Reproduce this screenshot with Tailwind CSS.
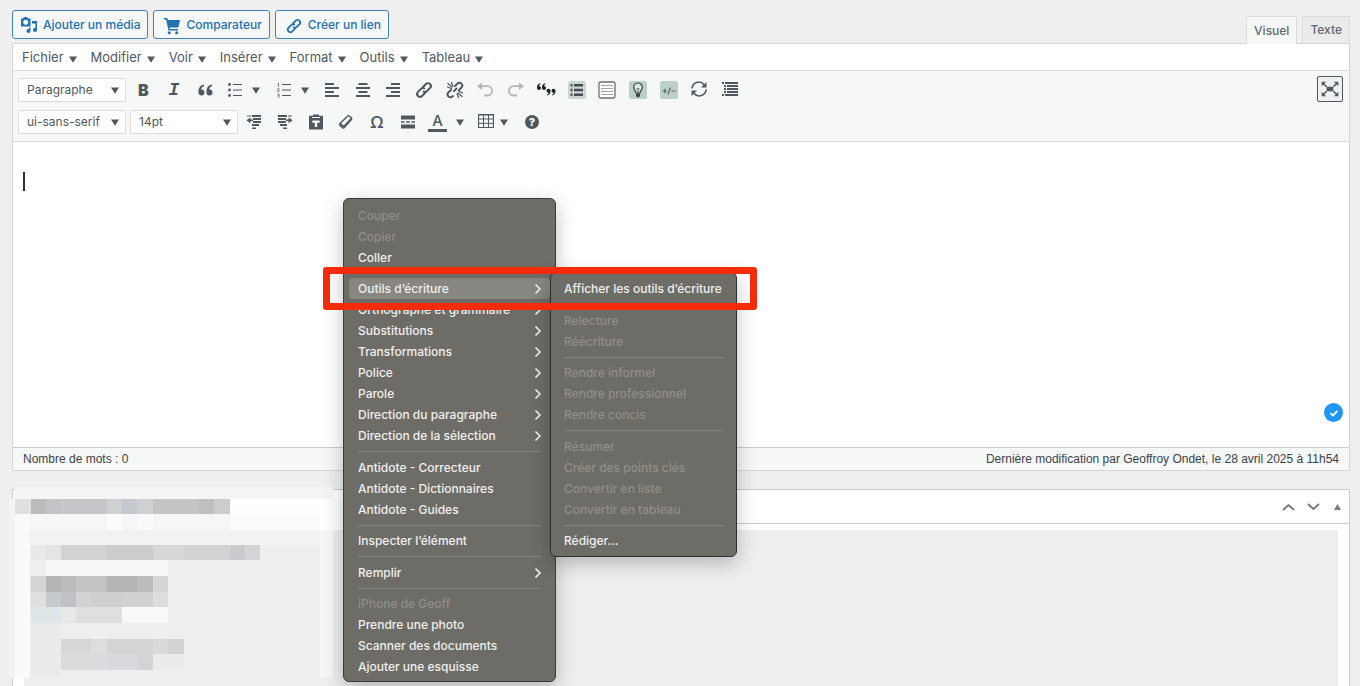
<!DOCTYPE html>
<html lang="fr">
<head>
  <meta charset="UTF-8">
  <title>Modifier l'article</title>
  <script src="https://cdn.jsdelivr.net/npm/@tailwindcss/browser@4"></script>
</head>
<body class="relative h-screen overflow-hidden bg-[#efefef] font-['Inter',sans-serif] text-[13px] text-[#50575e]">

  <!-- Shared icons -->
  <svg class="hidden">
    <symbol id="caret" viewBox="0 0 8 7"><path d="M0 0.5h8L4 6.8z" fill="currentColor"/></symbol>
    <symbol id="link" viewBox="0 0 20 20">
      <g fill="none" stroke="currentColor" stroke-width="2" stroke-linecap="round" transform="rotate(-45 10 10)">
        <path d="M8.6 12.9H4.400a2.900 2.900 0 0 1 0-5.800h4.200a2.900 2.900 0 0 1 2.700 1.900"/>
        <path d="M11.400 7.100h4.200a2.900 2.900 0 0 1 0 5.800h-4.200a2.900 2.900 0 0 1-2.700-1.900"/>
      </g>
    </symbol>
    <symbol id="chevron" viewBox="0 0 6 10"><path d="M1 1l4 4-4 4" fill="none" stroke="currentColor" stroke-width="1.700" stroke-linecap="round" stroke-linejoin="round"/></symbol>
  </svg>

  <main class="flex h-full flex-col pl-3 pr-[10px] pt-[10px]">

    <!-- Media buttons and tabs -->
    <div class="flex h-[33px] items-start justify-between text-[12px]">
      <div class="flex gap-[5px] font-medium text-[#2271b1]">
        <button class="flex h-[29px] items-center gap-[5px] rounded-[3px] border border-[#4083b5] bg-[#f6f7f7] px-[7px]">
          <svg class="size-[18px]" viewBox="0 0 18 18" fill="currentColor">
            <path fill-rule="evenodd" d="M4 1h3l1 1.500h2.500v8H1v-8h2zM5.700 3.700a2.500 2.500 0 1 0 0 5 2.500 2.500 0 0 0 0-5z"/>
            <path d="M12 5h5v9a2 2 0 1 1-1.600-2V7.500H12z"/>
            <path d="M10.500 11.500V15a2 2 0 1 1-1.600-2v-1.500z"/>
          </svg>
          Ajouter un média
        </button>
        <button class="flex h-[29px] items-center gap-[5px] rounded-[3px] border border-[#4083b5] bg-[#f6f7f7] px-[7px]">
          <svg class="ml-[2px] mt-[2px] size-[18px]" viewBox="0 0 18 18" fill="currentColor">
            <path d="M1 1h3.200l.8 2h12l-1.700 7.500H6.500l.3 1.500H15v1.600H5.500L3.100 2.600H1z"/>
            <circle cx="6.200" cy="15.700" r="1.500"/><circle cx="13.700" cy="15.700" r="1.500"/>
          </svg>
          Comparateur
        </button>
        <button class="flex h-[29px] items-center gap-[5px] rounded-[3px] border border-[#4083b5] bg-[#f6f7f7] px-[7px]">
          <svg class="ml-[2px] mt-[2px] size-[18px]"><use href="#link"/></svg>
          Créer un lien
        </button>
      </div>
      <div class="flex h-[27px] items-start gap-[5px] self-end font-medium text-[#646970]">
        <button class="relative h-7 border border-b-0 border-[#dcdcde] bg-[#f6f7f7] px-[7px]">Visuel</button>
        <button class="h-[27px] border border-b-0 border-[#dcdcde] bg-[#ebebeb] px-[7px]">Texte</button>
      </div>
    </div>

    <!-- Editor -->
    <section class="border border-[#d3d5d8] bg-white">
      <nav class="flex h-[27px] items-center gap-[14px] border-b border-[#dcdcde] px-[9px] pt-[2px]">
        <button class="flex items-center gap-[5px]">Fichier <svg class="mt-[3px] h-[7px] w-2"><use href="#caret"/></svg></button>
        <button class="flex items-center gap-[5px]">Modifier <svg class="mt-[3px] h-[7px] w-2"><use href="#caret"/></svg></button>
        <button class="flex items-center gap-[5px]">Voir <svg class="mt-[3px] h-[7px] w-2"><use href="#caret"/></svg></button>
        <button class="flex items-center gap-[5px]">Insérer <svg class="mt-[3px] h-[7px] w-2"><use href="#caret"/></svg></button>
        <button class="flex items-center gap-[5px]">Format <svg class="mt-[3px] h-[7px] w-2"><use href="#caret"/></svg></button>
        <button class="flex items-center gap-[5px]">Outils <svg class="mt-[3px] h-[7px] w-2"><use href="#caret"/></svg></button>
        <button class="flex items-center gap-[5px]">Tableau <svg class="mt-[3px] h-[7px] w-2"><use href="#caret"/></svg></button>
      </nav>

      <div class="flex items-start justify-between border-b border-[#dcdcde] bg-[#f6f7f7] py-[5px] pl-[5px] pr-[6px]">
        <div class="flex flex-col gap-1">
          <!-- Row 1 -->
          <div class="flex h-7 items-center">
            <div class="relative mr-[2px] w-[108px]">
              <select aria-label="Format de bloc" class="block h-6 w-full appearance-none border border-[#dcdcde] bg-white pl-2 text-[12px]"><option>Paragraphe</option></select>
              <svg class="pointer-events-none absolute right-[7px] top-[9px] h-[7px] w-2"><use href="#caret"/></svg>
            </div>
            <div class="grid w-[92px] grid-cols-3">
              <button aria-label="Gras" class="flex h-7 items-center justify-center text-[16px] font-black">B</button>
              <button aria-label="Italique" class="flex h-7 items-center justify-center font-['Liberation_Mono',monospace] text-[18px] font-bold italic">I</button>
              <button aria-label="Citation" class="flex h-7 items-center justify-center">
                <svg class="size-5" viewBox="0 0 20 20" fill="currentColor"><path d="M9.500 12.500a3 3 0 1 1-6 0C3.200 8.500 5 5.300 9 4.500v1.700C7.200 6.900 6.300 8 6.300 9.600a3 3 0 0 1 3.200 2.900zM17.500 12.500a3 3 0 1 1-6 0C11.200 8.500 13 5.300 17 4.500v1.700c-1.800.7-2.700 1.800-2.700 3.400a3 3 0 0 1 3.200 2.900z"/></svg>
              </button>
            </div>
            <button aria-label="Liste à puces" class="flex h-7 w-[49px] items-center gap-[7px] pl-[5px]">
              <svg class="size-5" viewBox="0 0 20 20" fill="currentColor"><circle cx="4.500" cy="4.500" r="1.400"/><circle cx="4.500" cy="10" r="1.400"/><circle cx="4.500" cy="15.500" r="1.400"/><path d="M8 4h9v1H8zM8 9.500h9v1H8zM8 15h9v1H8z"/></svg>
              <svg class="h-[7px] w-2"><use href="#caret"/></svg>
            </button>
            <button aria-label="Liste numérotée" class="flex h-7 w-12 items-center gap-[7px] pl-[5px]">
              <svg class="size-5" viewBox="0 0 20 20" fill="currentColor"><path d="M8 4h9v1H8zM8 9.500h9v1H8zM8 15h9v1H8z"/><path d="M4 3h1v4H4zM3.500 3.500h1v1h-1zM3.200 8.300h2.300v2.200H4.200v.8h1.500v.8H3.200V9.800h1.400v-.7H3.200zM3.200 13.500h2.400v4H3.200v-.8h1.500v-.8H3.500v-.8h1.200v-.8H3.200z" opacity=".7"/></svg>
              <svg class="h-[7px] w-2"><use href="#caret"/></svg>
            </button>
            <div class="grid w-[428px] grid-cols-14">
              <button aria-label="Aligner à gauche" class="flex h-7 items-center justify-center">
                <svg class="size-5" viewBox="0 0 20 20" fill="currentColor"><path d="M3 3h9v2H3zM3 7h14v2H3zM3 11h9v2H3zM3 15h14v2H3z"/></svg>
              </button>
              <button aria-label="Centrer" class="flex h-7 items-center justify-center">
                <svg class="size-5" viewBox="0 0 20 20" fill="currentColor"><path d="M5.500 3h9v2h-9zM3 7h14v2H3zM5.500 11h9v2h-9zM3 15h14v2H3z"/></svg>
              </button>
              <button aria-label="Aligner à droite" class="flex h-7 items-center justify-center">
                <svg class="size-5" viewBox="0 0 20 20" fill="currentColor"><path d="M8 3h9v2H8zM3 7h14v2H3zM8 11h9v2H8zM3 15h14v2H3z"/></svg>
              </button>
              <button aria-label="Insérer un lien" class="flex h-7 items-center justify-center">
                <svg class="size-5"><use href="#link"/></svg>
              </button>
              <button aria-label="Supprimer le lien" class="flex h-7 items-center justify-center">
                <svg class="size-5" viewBox="0 0 20 20" fill="none" stroke="currentColor" stroke-width="2" stroke-linecap="round"><path d="M8 16l-1 .8a2.900 2.900 0 0 1-4-4L6 10M10 6l2.800-2.800a2.900 2.900 0 0 1 4 4L14 10.200M9 11l2.500-2.500"/><path stroke-width="1.300" d="M3 3.500l4 3.500M6.500 2.500l1.500 3.500M2.500 7l4 1.500M13 13l4 3.500M12 14l1.500 3.500M14 11.500l3.500 1.300"/></svg>
              </button>
              <button aria-label="Annuler" class="flex h-7 items-center justify-center text-[#b4b7ba]">
                <svg class="size-5" viewBox="0 0 20 20"><path d="M7 2.500v7.500L2 6.200z" fill="currentColor"/><path d="M6 6.200h6.500a4.600 4.600 0 0 1 0 9.300H9" fill="none" stroke="currentColor" stroke-width="1.800"/></svg>
              </button>
              <button aria-label="Rétablir" class="flex h-7 items-center justify-center text-[#b4b7ba]">
                <svg class="size-5" viewBox="0 0 20 20"><path d="M13 2.500v7.500l5-3.800z" fill="currentColor"/><path d="M14 6.200H7.500a4.600 4.600 0 0 0 0 9.300H11" fill="none" stroke="currentColor" stroke-width="1.800"/></svg>
              </button>
              <button aria-label="Guillemets" class="flex h-7 items-center justify-center text-[#1d2327]">
                <svg class="size-5" viewBox="0 0 20 20" fill="currentColor"><path d="M5 8a2 2 0 1 1-4 0C.8 5.500 2 3.800 4.300 3.300v1.100c-1 .4-1.400.9-1.400 1.600A2 2 0 0 1 5 8zM10 8a2 2 0 1 1-4 0c-.2-2.500 1-4.200 3.300-4.700v1.100c-1 .4-1.400.9-1.400 1.600A2 2 0 0 1 10 8zM10.500 10.800a2 2 0 1 1 4 0c.2 2.500-1 4.200-3.300 4.700v-1.100c1-.4 1.400-.9 1.400-1.600a2 2 0 0 1-2.100-2zM15.500 10.800a2 2 0 1 1 4 0c.2 2.500-1 4.200-3.300 4.700v-1.100c1-.4 1.400-.9 1.400-1.600a2 2 0 0 1-2.100-2z"/></svg>
              </button>
              <button aria-label="Sommaire" class="flex h-7 items-center justify-center">
                <svg class="size-[18px]" viewBox="0 0 18 18"><rect width="18" height="18" rx="2.500" fill="#cbd5d1"/><path d="M6 3h9v2.400H6zM6 7.800h9v2.400H6zM6 12.600h9V15H6zM2.500 3h2v2.400h-2zM2.500 7.800h2v2.400h-2zM2.500 12.600h2V15h-2z" fill="#454b50"/></svg>
              </button>
              <button aria-label="Encadré" class="flex h-7 items-center justify-center">
                <svg class="size-[18px]" viewBox="0 0 18 18" fill="none"><rect x="1" y="1" width="16" height="16" rx="1.500" fill="#fff" stroke="#6b7074" stroke-width="1.300"/><path d="M3 4.500h12M3 7.500h12M3 10.500h12M3 13.500h12" stroke="#a2a6a9"/></svg>
              </button>
              <button aria-label="Astuce" class="flex h-7 items-center justify-center">
                <svg class="size-[18px]" viewBox="0 0 18 18" fill="none"><rect width="18" height="18" rx="2.500" fill="#bdd0c8"/><path d="M7 12c0-2-2.300-3-2.300-5.700a4.300 4.300 0 0 1 8.600 0C13.300 9 11 10 11 12z" fill="#dbe5e1" stroke="#3d4347" stroke-width="1.200"/><path d="M7.800 7l1.200 1.500L10.200 7M9 8.500V12" stroke="#3d4347" stroke-width=".8"/><path d="M7 12.500h4v2.500l-1 1.200H8L7 15z" fill="#3d4347"/></svg>
              </button>
              <button aria-label="Plus et moins" class="flex h-7 items-center justify-center">
                <svg class="size-[18px]" viewBox="0 0 18 18" fill="none"><rect width="18" height="18" rx="2.500" fill="#bdd0c8"/><path d="M2.500 10h4.600M4.800 7.700v4.600M8 13.500l2.400-7M11.500 10h4" stroke="#5c6965" stroke-width="1.200"/></svg>
              </button>
              <button aria-label="Actualiser" class="flex h-7 items-center justify-center pb-[3px]">
                <svg class="size-[18px]" viewBox="0 0 18 18"><path d="M2 8.500A6.700 6.700 0 0 1 14 4.700M16 9.500A6.700 6.700 0 0 1 4 13.300" fill="none" stroke="currentColor" stroke-width="1.600"/><path d="M16.500 2v5.500H11zM1.500 16v-5.500H7z" fill="currentColor"/></svg>
              </button>
              <button aria-label="Table des matières" class="flex h-7 items-center justify-center pb-[3px]">
                <svg class="size-[18px]" viewBox="0 0 18 18" fill="currentColor"><path d="M1 2h2v2H1zM4 2h13v2H4zM3 5h2v2H3zM6 5h11v2H6zM3 8h2v2H3zM6 8h11v2H6zM3 11h2v2H3zM6 11h11v2H6zM1 14h2v2H1zM4 14h13v2H4z"/></svg>
              </button>
            </div>
          </div>

          <!-- Row 2 -->
          <div class="flex h-7 items-center">
            <div class="relative mr-1 w-[108px]">
              <select aria-label="Police" class="block h-6 w-full appearance-none border border-[#dcdcde] bg-white pl-2 text-[12px]"><option>ui-sans-serif</option></select>
              <svg class="pointer-events-none absolute right-[7px] top-[9px] h-[7px] w-2"><use href="#caret"/></svg>
            </div>
            <div class="relative mr-px w-[108px]">
              <select aria-label="Taille" class="block h-6 w-full appearance-none border border-[#dcdcde] bg-white pl-2 text-[12px]"><option>14pt</option></select>
              <svg class="pointer-events-none absolute right-[7px] top-[9px] h-[7px] w-2"><use href="#caret"/></svg>
            </div>
            <div class="grid w-[184px] grid-cols-6">
              <button aria-label="Diminuer le retrait" class="flex h-7 items-center justify-center">
                <svg class="size-5" viewBox="0 0 20 20" fill="currentColor"><path d="M8 3h9v2H8zM9 6h8v2H9zM9 9h8v2H9zM8 12h7v2H8zM3 3.500h4v1H3zM8 15.500h4v1.500H8zM6.500 5.500v2h2.500v1.500H6.500v2.200L2.300 8.300z"/></svg>
              </button>
              <button aria-label="Augmenter le retrait" class="flex h-7 items-center justify-center">
                <svg class="size-5" viewBox="0 0 20 20" fill="currentColor"><path d="M3 3h9v2H3zM3 6h8v2H3zM3 9h8v2H3zM5 12h7v2H5zM13 3.500h4v1h-4zM8 15.500h4v1.500H8zM13.500 5.500v2H11v1.500h2.500v2.200l4.200-2.900z"/></svg>
              </button>
              <button aria-label="Coller en texte" class="flex h-7 items-center justify-center">
                <svg class="size-5" viewBox="0 0 20 20"><path d="M7 2.500h6v1.300h4v13.700H3V3.800h4z" fill="currentColor"/><path d="M6.300 8.500h7.400v2.200h-2.500V15H8.800v-4.300H6.300z" fill="#f6f7f7"/><path d="M6 5.500h8" stroke="#f6f7f7"/></svg>
              </button>
              <button aria-label="Effacer la mise en forme" class="flex h-7 items-center justify-center">
                <svg class="size-5" viewBox="0 0 20 20" fill="none" stroke="currentColor" stroke-linejoin="round"><path d="M4 11.500L11.500 4.200c.6-.6 1.200-.7 1.800-.2l2 1.700c.6.6.6 1.300.1 1.900l-7 8c-.5.6-1.200.6-1.800.1l-2.500-2.200c-.7-.6-.7-1.300-.1-2z" stroke-width="1.400"/><path d="M4.300 11.800l3.500 2.700 8-8.500" stroke-width="1.600"/></svg>
              </button>
              <button aria-label="Caractère spécial" class="flex h-7 items-center justify-center font-['Open_Sans',sans-serif] text-[17px] font-semibold">Ω</button>
              <button aria-label="Lire la suite" class="flex h-7 items-center justify-center">
                <svg class="size-5" viewBox="0 0 20 20" fill="currentColor"><path d="M3 3.500h14v4H3zM3 9.200h3.500v1.600H3zM8.200 9.200h3.600v1.600H8.200zM13.500 9.200H17v1.600h-3.500zM3 12.500h14v4H3z"/></svg>
              </button>
            </div>
            <button aria-label="Couleur du texte" class="flex h-7 w-12 items-center gap-[9px] pl-[5px]">
              <span class="w-[19px] border-b-[3px] border-current text-center text-[15px] font-medium leading-[16px]">A</span>
              <svg class="h-[7px] w-2"><use href="#caret"/></svg>
            </button>
            <button aria-label="Tableau" class="flex h-7 w-[46px] items-center gap-[6px] pl-[7px]">
              <svg class="mb-[3px] size-4" viewBox="0 0 16 16" fill="none" stroke="currentColor"><path d="M.5 1.500h15v13H.5z" stroke-width="1.200"/><path d="M0 2h16M.5 6h15M.5 10.300h15M5.500 2v12.500M10.500 2v12.500"/></svg>
              <svg class="h-[7px] w-2"><use href="#caret"/></svg>
            </button>
            <button aria-label="Aide" class="flex h-7 w-[30px] items-center justify-center">
              <span class="flex size-[14px] items-center justify-center rounded-full bg-[#50575e] text-[11px] font-extrabold text-white">?</span>
            </button>
          </div>
        </div>
        <button aria-label="Plein écran" class="flex size-[26px] items-center justify-center rounded-[2px] border border-[#50575e] bg-[#f0f0f1]">
          <svg class="size-5" viewBox="0 0 18 18" fill="currentColor"><path d="M6 7h6v4H6zM1.500 2.500h4L1.500 6.500zM16.500 2.500h-4l4 4zM1.500 15.500h4l-4-4zM16.500 15.500h-4l4-4z"/><path d="M3 4l3 3M15 4l-3 3M3 14l3-3M15 14l-3-3" stroke="currentColor" stroke-width="1.400"/></svg>
        </button>
      </div>

      <div class="relative">
        <textarea aria-label="Contenu" class="block h-[305px] w-full resize-none bg-white p-[10px] outline-none"></textarea>
        <span class="absolute left-[10px] top-[30px] h-[19px] w-[2px] bg-[#2c3338]"></span>
        <span class="absolute bottom-[25px] right-[6px] flex size-[19px] items-center justify-center rounded-full bg-[#2196f0]">
          <svg class="size-[10px]" viewBox="0 0 10 10"><path d="M1.500 5.200l2.400 2.300 4.500-4.500" fill="none" stroke="#fff" stroke-width="1.800"/></svg>
        </span>
      </div>

      <footer class="flex h-[23px] items-center justify-between border-t border-[#c9ced2] bg-[#f6f7f7] px-[10px] font-['Liberation_Sans',sans-serif] text-[12px] text-[#3c434a]">
        <span>Nombre de mots : 0</span>
        <span>Dernière modification par Geoffroy Ondet, le 28 avril 2025 à 11h54</span>
      </footer>
    </section>

    <!-- Meta box -->
    <section class="mt-[18px] flex flex-1 flex-col border border-b-0 border-[#c9cccf] bg-white">
      <header class="flex h-[34px] items-center justify-end gap-3 border-b border-[#c9cccf] pr-2 text-[#787c82]">
        <button aria-label="Monter"><svg class="h-2 w-[13px]" viewBox="0 0 13 8"><path d="M1 7l5.500-5L12 7" fill="none" stroke="currentColor" stroke-width="2"/></svg></button>
        <button aria-label="Descendre"><svg class="h-2 w-[13px]" viewBox="0 0 13 8"><path d="M1 1l5.500 5L12 1" fill="none" stroke="currentColor" stroke-width="2"/></svg></button>
        <button aria-label="Replier" class="pl-[2px]"><svg class="h-[6px] w-[7px]" viewBox="0 0 7 6"><path d="M3.500 0L7 6H0z" fill="currentColor"/></svg></button>
      </header>
      <div class="mx-[11px] mt-[6px] flex-1 bg-[#eee]"></div>
    </section>
  </main>

  <!-- Pixelated area -->
  <svg id="mosaic" class="absolute left-0 top-[487px] h-[191px] w-[345px]" viewBox="0 0 345 191" shape-rendering="crispEdges"></svg>

  <!-- Context menus -->
  <div id="mainMenu" role="menu" class="absolute left-[343px] top-[198px] w-[213px] rounded-md border border-[#3b3b39] bg-[#6d6c67] px-[5px] pb-[4px] pt-[6px] shadow-[0_6px_20px_rgba(0,0,0,0.25)]"></div>
  <div id="subMenu" role="menu" class="absolute left-[550px] top-[272px] w-[187px] rounded-md border border-[#2f2f2e] bg-[#6d6c67] px-[4px] py-[5px] shadow-[0_6px_20px_rgba(0,0,0,0.25)]"></div>

  <!-- Highlight frame -->
  <div class="pointer-events-none absolute left-[323px] top-[267px] h-[43px] w-[434px] rounded-[3px] border-[7px] border-[#f42c0c]"></div>

  <script>
    // '-' is a short separator, '=' a slightly taller one, '!' disabled, '>' has a submenu, '*' selected
    const mainItems = [
      '!Couper', '!Copier', 'Coller', '-',
      '*>Outils d’écriture', '>Orthographe et grammaire', '>Substitutions', '>Transformations',
      '>Police', '>Parole', '>Direction du paragraphe', '>Direction de la sélection', '=',
      'Antidote - Correcteur', 'Antidote - Dictionnaires', 'Antidote - Guides', '-',
      'Inspecter l’élément', '=', '>Remplir', '-',
      '!iPhone de Geoff', 'Prendre une photo', 'Scanner des documents', 'Ajouter une esquisse'
    ];
    const subItems = [
      'Afficher les outils d’écriture', '=', '!Relecture', '!Réécriture', '-',
      '!Rendre informel', '!Rendre professionnel', '!Rendre concis', '=',
      '!Résumer', '!Créer des points clés', '!Convertir en liste', '!Convertir en tableau', '-',
      'Rédiger...'
    ];

    function fillMenu(id, items) {
      const menu = document.getElementById(id);
      items.forEach(item => {
        if (item === '-' || item === '=') {
          const sep = document.createElement('div');
          sep.className = "mx-[9px] flex items-center " + (item === '-' ? "h-[10px]" : "h-[11px]");
          sep.innerHTML = '<div class="h-px w-full bg-[#868580]"></div>';
          menu.appendChild(sep);
          return;
        }
        const button = document.createElement('button');
        button.setAttribute('role', 'menuitem');
        button.disabled = item.startsWith('!');
        button.className = "flex h-[21px] w-full items-center justify-between rounded-[4px] px-[9px] text-left text-[12px] font-medium whitespace-nowrap "
          + (item.startsWith('!') ? "text-[#908f8a]" : "text-[#f0f0ee]")
          + (item.startsWith('*') ? " bg-[#878681]" : "");
        button.textContent = item.replace(/^[!*>]+/, '');
        if (item.includes('>')) {
          button.insertAdjacentHTML('beforeend', '<svg class="h-[10px] w-[6px]"><use href="#chevron"/></svg>');
        }
        menu.appendChild(button);
      });
    }
    fillMenu('mainMenu', mainItems);
    fillMenu('subMenu', subItems);

    // Mosaic blocks: x, y, width, height, colour
    const blocks = [
      [15, 0, 318, 12, '#f5f5f5'], [9, 12, 6, 179, '#f3f3f3'], [15, 12, 318, 179, '#eeeeee'],
      [15, 27, 15, 164, '#fafafa'], [30, 27, 200, 16, '#f6f6f6'], [107, 27, 15, 16, '#fcfcfc'], [137, 27, 16, 16, '#fafafa'],
      [30, 43, 290, 15, '#f2f2f2'],
      [230, 12, 115, 31, '#fefefe'], [230, 27, 90, 16, '#fbfbfb'],
      [15, 12, 16, 15, '#dfe0df'], [31, 12, 15, 15, '#bcbcbe'], [46, 12, 15, 15, '#c3c4c8'], [61, 12, 46, 15, '#c5c6c9'],
      [107, 12, 15, 15, '#cfd0d2'], [122, 12, 15, 15, '#c6c8cf'], [137, 12, 16, 15, '#cfd0d2'], [153, 12, 46, 15, '#c4c4c5'],
      [199, 12, 15, 15, '#bebfbe'], [214, 12, 16, 15, '#ccccce'],
      [31, 58, 15, 15, '#e9e9ea'], [46, 58, 15, 15, '#e5e5e6'], [61, 58, 46, 15, '#d1d2d4'], [107, 58, 46, 15, '#cbccce'], [153, 58, 31, 15, '#d6d7d8'],
      [184, 58, 46, 15, '#d1d2d3'], [230, 58, 15, 15, '#cacbce'], [245, 58, 15, 15, '#d3d4d5'],
      [46, 73, 122, 16, '#f6f6f5'],
      [31, 89, 15, 16, '#d4d4d4'], [46, 89, 15, 16, '#b5b6b7'], [61, 89, 15, 16, '#babbbb'], [76, 89, 31, 16, '#c2c3c3'],
      [107, 89, 30, 16, '#b4b6b5'], [137, 89, 16, 16, '#babbbb'], [153, 89, 15, 16, '#d4d6d6'],
      [31, 105, 15, 15, '#dedfdf'], [46, 105, 15, 15, '#c6c9ce'], [61, 105, 15, 15, '#bfc1c5'], [76, 105, 15, 15, '#d2d3d5'], [91, 105, 31, 15, '#cdcfd1'],
      [122, 105, 31, 15, '#d0d1d3'], [153, 105, 15, 15, '#dcddde'],
      [31, 120, 30, 16, '#dfe6ea'], [61, 120, 15, 16, '#e7e8e8'], [76, 120, 46, 16, '#dedfe0'], [122, 120, 46, 16, '#f9f9f9'],
      [31, 136, 30, 55, '#ebebec'],
      [61, 152, 30, 15, '#d6d7d9'], [91, 152, 16, 15, '#dcdddd'], [107, 152, 46, 15, '#d2d4d6'], [153, 152, 15, 15, '#d8d9da'], [168, 152, 16, 15, '#d1d2d3'],
      [61, 167, 46, 16, '#dadbdc'], [107, 167, 30, 16, '#d8dadf'], [137, 167, 16, 16, '#d2d4d5'], [153, 167, 31, 16, '#eaebeb'],
      [320, 43, 13, 148, '#f6f6f6']
    ];
    document.getElementById('mosaic').innerHTML = blocks.map(b =>
      `<rect x="${b[0]}" y="${b[1]}" width="${b[2]}" height="${b[3]}" fill="${b[4]}"/>`
    ).join('');
  </script>
</body>
</html>
